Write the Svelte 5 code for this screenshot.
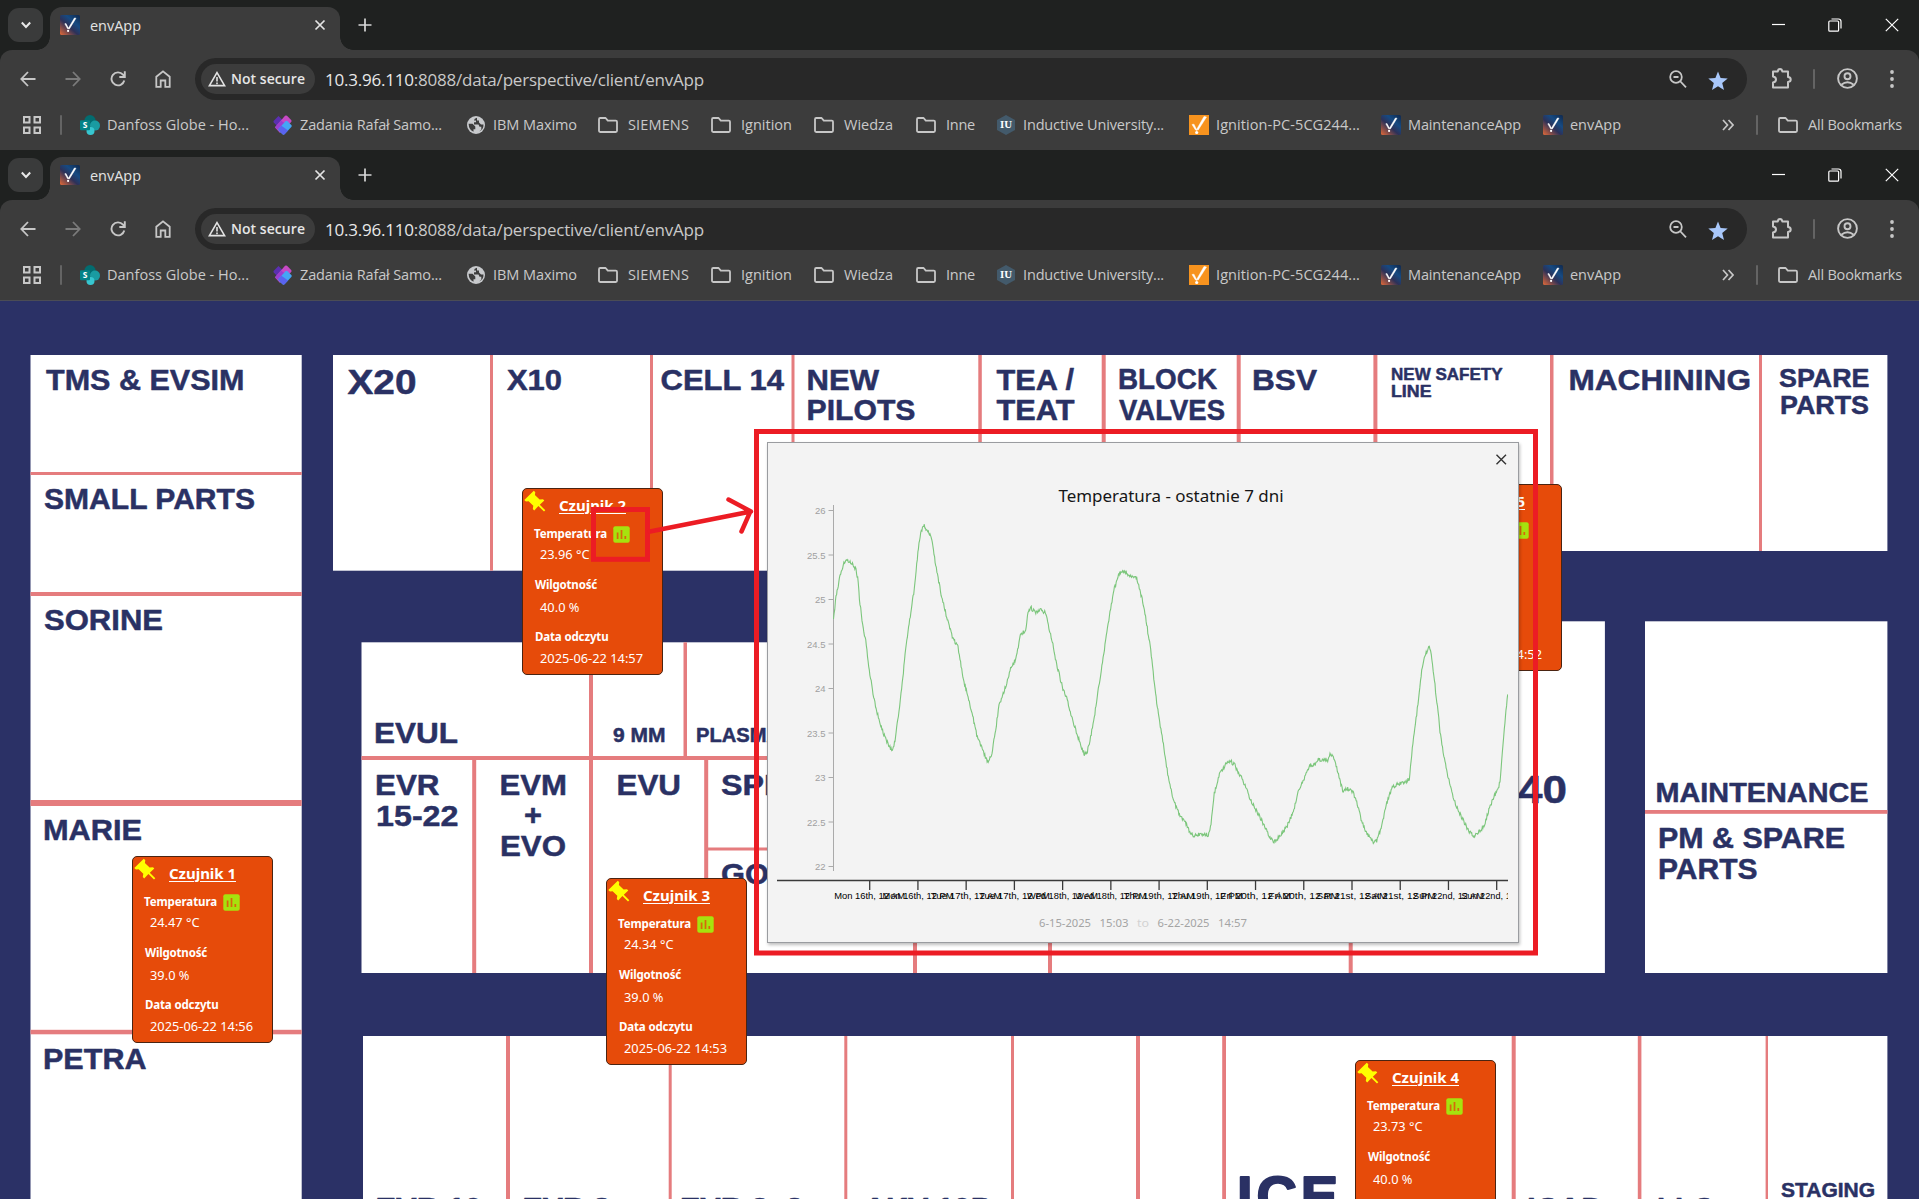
<script>
  // Spread or tighten the letters so a label takes exactly `width` pixels.
  function fit(node, width) {
    const natural = node.getBoundingClientRect().width;
    const count = node.textContent.length;
    node.style.letterSpacing = `${(width - natural) / count}px`;
  }

  const bookmarks = [
    { icon: 'sharepoint', label: 'Danfoss Globe - Ho...', w: 142 },
    { icon: 'planner', label: 'Zadania Rafał Samo...', w: 142 },
    { icon: 'globe', label: 'IBM Maximo', w: 84 },
    { icon: 'folder', label: 'SIEMENS', w: 61 },
    { icon: 'folder', label: 'Ignition', w: 51 },
    { icon: 'folder', label: 'Wiedza', w: 49 },
    { icon: 'folder', label: 'Inne', w: 29 },
    { icon: 'iu', label: 'Inductive University...', w: 141 },
    { icon: 'orange', label: 'Ignition-PC-5CG244...', w: 144 },
    { icon: 'app', label: 'MaintenanceApp', w: 113 },
    { icon: 'app', label: 'envApp', w: 51 }
  ];

  // Floor plan: white blocks, partition walls and room names.
  const blocks = [
    [30.5, 355, 271.2, 850],
    [333, 355, 1100, 215.7],
    [1400, 355, 487.4, 196],
    [361.5, 642.3, 1000, 330.7],
    [1350, 621.3, 254.9, 351.7],
    [1645, 621.3, 242.4, 351.7],
    [363, 1036, 1524.4, 170]
  ];
  const walls = [
    [30.5, 472, 271.2, 3], [30.5, 592, 271.2, 4], [30.5, 800, 271.2, 6], [30.5, 1029.8, 271.2, 4.5],
    [490, 355, 3, 215.7], [650, 355, 3, 215.7], [791.5, 355, 3, 215.7], [978.3, 355, 3.5, 215.7],
    [1101.7, 355, 4, 215.7], [1236.7, 355, 4, 215.7], [1373.4, 355, 4, 215.7], [1550, 355, 3.5, 196],
    [1759, 355, 3, 196],
    [361.5, 756, 700, 4], [706, 847.5, 200, 3],
    [589, 642.3, 4, 330.7], [683.5, 642.3, 3.5, 114], [704.2, 758, 4, 215], [472.2, 758, 4, 215],
    [913, 758, 4, 215], [1048, 758, 4, 215], [1348.7, 758, 4, 215],
    [1645, 810, 242.4, 3.8],
    [506, 1036, 4, 170], [668.7, 1036, 3, 170], [844.3, 1036, 3, 170], [1011, 1036, 3, 170],
    [1136, 1036, 4, 170], [1222.2, 1036, 3.8, 170], [1511.7, 1036, 4, 170], [1637.8, 1036, 3.6, 170],
    [1765.6, 1036, 2.4, 170]
  ];
  // [text, left, right, baseline, font size]
  const rooms = [
    ['TMS & EVSIM', 46, 244.5, 390.3, 30], ['SMALL PARTS', 44, 255, 509.3, 30],
    ['SORINE', 44, 163, 630.3, 30], ['MARIE', 43, 142, 840.3, 30], ['PETRA', 43, 146.5, 1069, 30],
    ['X20', 347.5, 416.5, 394, 35.5], ['X10', 507, 562, 390.2, 30], ['CELL 14', 660.5, 784, 390.2, 30],
    ['NEW', 806.5, 879, 390.2, 30], ['PILOTS', 806.5, 915.5, 420.2, 30],
    ['TEA /', 996.5, 1074, 390, 30], ['TEAT', 996.5, 1074.5, 420.2, 30],
    ['BLOCK', 1118, 1217, 388.5, 29], ['VALVES', 1119, 1225, 419.5, 29], ['BSV', 1252, 1317, 390.2, 30],
    ['NEW SAFETY', 1391, 1502.5, 380.3, 17], ['LINE', 1391, 1431.5, 397.2, 17],
    ['MACHINING', 1568.5, 1751, 389.8, 30], ['SPARE', 1779, 1869.5, 386.5, 26.5], ['PARTS', 1780, 1869, 413.8, 26.5],
    ['EVUL', 374, 458, 742.7, 30], ['9 MM', 613, 665.5, 742.3, 20], ['PLASMA', 696, 781, 742.3, 20],
    ['EVR', 375, 439.5, 795.3, 30], ['15-22', 376, 458.5, 825.7, 30],
    ['EVM', 499.5, 567, 795.3, 30], ['+', 524, 542, 825, 30], ['EVO', 500, 566, 856, 30],
    ['EVU', 616.5, 681, 795.3, 30], ['SPI', 721, 773, 794.8, 30], ['GO', 721, 769, 883.7, 30],
    ['40', 1518, 1567, 802.7, 39.5],
    ['MAINTENANCE', 1655.5, 1868.5, 801.6, 28], ['PM & SPARE', 1658, 1845, 848.2, 30], ['PARTS', 1658, 1757.5, 878.7, 30],
    ['EVR 10', 375.5, 482, 1217.5, 30], ['EVR 8', 522.5, 610, 1217.5, 30], ['EVR 2+3', 680, 803, 1217.5, 30],
    ['AKV 10P', 864, 991, 1217.5, 30],
    ['ICAD', 1527, 1604, 1217.5, 30], ['LLC', 1657, 1714, 1217.5, 30], ['STAGING', 1781, 1875, 1197.2, 20.5]
  ];

  const sensors = [
    { id: 1, x: 132, y: 856, temp: '24.47', hum: '39.0', date: '2025-06-22 14:56' },
    { id: 2, x: 522, y: 488, temp: '23.96', hum: '40.0', date: '2025-06-22 14:57' },
    { id: 3, x: 606, y: 878, temp: '24.34', hum: '39.0', date: '2025-06-22 14:53' },
    { id: 4, x: 1355, y: 1060, temp: '23.73', hum: '40.0', date: '2025-06-22 14:53' },
    { id: 5, x: 1421, y: 484, temp: '24.10', hum: '40.0', date: '2025-06-22 14:52' }
  ];

  const yTicks = ['26', '25.5', '25', '24.5', '24', '23.5', '23', '22.5', '22'];
  const xTicks = ['Mon 16th', 'Tue 17th', 'Wed 18th', 'Thu 19th', 'Fri 20th', 'Sat 21st', 'Sun 22nd'].flatMap((d) => [
    `${d}, 12 AM`,
    `${d}, 12 PM`
  ]);

  const curve = [
    833.5, 619, 836, 595.6, 840, 577, 843.3, 564.5, 847.7, 559.8, 851.3, 562.5, 856, 569.3, 857.7, 578.7, 860, 604,
    863.3, 629.5, 865.7, 641.3, 869.3, 670, 874.3, 700.5, 879, 719.7, 884.3, 736, 889.3, 746.8, 892.3, 751.2, 895, 741,
    897.7, 720.7, 901, 693.7, 905.7, 649.7, 909.7, 619.3, 914.3, 588.9, 916.7, 565.2, 919, 541.6, 921.3, 530.7,
    923.7, 525.3, 927.7, 530.4, 931.7, 539.9, 935.7, 565.2, 941.7, 597.3, 947.3, 619.3, 952.3, 636.2, 958, 647.4,
    960, 659.9, 964, 681.9, 971, 708.9, 976.7, 734.3, 981.7, 747.8, 986, 758.9, 988.7, 762.5, 992, 752.9, 995.7, 729.2,
    999, 705.5, 1005, 688.6, 1010, 670, 1015, 660.9, 1018.3, 648, 1020.3, 635.5, 1023.3, 631.8, 1025.7, 631.8,
    1028, 612.6, 1030.7, 607, 1034.7, 612.6, 1039.3, 609.7, 1045.3, 612.7, 1048.3, 624.4, 1052.3, 641.3, 1056, 661.6,
    1062.3, 686.9, 1067.3, 700.5, 1073.3, 722.4, 1080, 742.7, 1084, 754, 1086.7, 754, 1090, 741, 1094.3, 717.4,
    1100, 678.5, 1105, 644.7, 1110, 612.6, 1113.3, 592.3, 1117.3, 578.7, 1121, 570.6, 1126.7, 572.7, 1132.7, 578.1,
    1136.7, 578.1, 1139.3, 588.2, 1143.3, 604.1, 1146.7, 624.4, 1150.7, 649.7, 1155, 688.6, 1159, 719, 1164, 747.8,
    1168.3, 778.2, 1174, 801.9, 1180, 815.4, 1186, 823.8, 1191, 834.7, 1195, 836, 1198, 834.3, 1208.3, 834.7,
    1211, 823.8, 1214.3, 793.4, 1220, 773.1, 1225.7, 764.7, 1230.3, 760.6, 1235, 765.7, 1243.3, 781.6, 1251.7, 801.9,
    1261.7, 820.5, 1268.3, 834.7, 1274, 842, 1280, 835.7, 1286.7, 827.2, 1293.3, 812, 1299.3, 788.3, 1306.7, 773.1,
    1310.7, 764, 1313.3, 766, 1318.3, 759.8, 1327.7, 759.6, 1330, 754, 1333.3, 757.9, 1336.7, 768, 1342.7, 791,
    1348.3, 788.8, 1353.3, 792.4, 1357.3, 803.6, 1361.7, 822.2, 1368.3, 835.7, 1373.3, 841.8, 1376.7, 840.8,
    1381.7, 825.5, 1386.7, 803.6, 1391.7, 788.3, 1398.3, 783.8, 1406.7, 781.6, 1409.3, 778.2, 1412.3, 747.8,
    1416.7, 714, 1421.7, 671.7, 1425, 654.8, 1429.3, 647, 1431.3, 654.8, 1435, 685.2, 1440, 730.9, 1445, 763,
    1450.7, 788.3, 1456.7, 807, 1463.3, 820.5, 1469.3, 832.3, 1474, 836, 1478.3, 832.3, 1484, 826.2, 1488.3, 812,
    1493.3, 798.5, 1498.3, 788.3, 1500, 781.6, 1502.3, 754.6, 1504.3, 727.5, 1507.7, 693.7
  ];

  // Sensor jitter: small and deterministic.
  function trace(values) {
    let seed = 7;
    let out = `M${values[0]} ${values[1]}`;
    for (let i = 2; i < values.length; i += 2) {
      const [x0, y0, x1, y1] = values.slice(i - 2, i + 2);
      const n = Math.max(1, Math.round((x1 - x0) / 0.6));
      for (let k = 1; k <= n; k++) {
        seed = (seed * 73 + 41) % 1009;
        const noise = (seed / 1009 - 0.5) * 4;
        out += `L${(x0 + ((x1 - x0) * k) / n).toFixed(1)} ${(y0 + ((y1 - y0) * k) / n + noise).toFixed(1)}`;
      }
    }
    return out;
  }
  const line = trace(curve);
</script>

{#snippet icon(kind)}
  {#if kind === 'folder'}
    <svg class="ico" viewBox="0 0 20 20" fill="none" stroke="#c7c7c7" stroke-width="1.8" stroke-linejoin="round">
      <path d="M1 16V4.2Q1 3 2.2 3H7.6L9.8 5.6H17.8Q19 5.6 19 6.8V15.8Q19 17 17.8 17H2.2Q1 17 1 15.8Z" />
    </svg>
  {:else if kind === 'sharepoint'}
    <svg class="ico" viewBox="0 0 20 20">
      <circle cx="10" cy="5.6" r="5.6" fill="#036c70" />
      <circle cx="15" cy="10.6" r="5" fill="#1a9ba1" />
      <circle cx="10.5" cy="16" r="4" fill="#37c6d0" />
      <rect x="0" y="5.2" width="10" height="10" rx="1" fill="#038387" />
      <text x="5" y="13.2" font-size="8.5" font-weight="700" fill="#fff" text-anchor="middle">S</text>
    </svg>
  {:else if kind === 'planner'}
    <svg class="ico" viewBox="0 0 20 20">
      <path d="M5.5 1 10 5.5 5 12 .8 7.6Q0 6.600 .8 5.700Z" fill="#5b2fb0" />
      <path d="M12 .8Q13 0 14 .8L18.200 5Q19 6 18.200 7L7 18 2 12.500Z" fill="#c649c4" />
      <path d="M2 12 8 5.500 12.500 9 6.500 16.500Z" fill="#9a3fd0" />
      <path d="M12.600 6.200Q13.500 5.400 14.400 6.200L18.300 10Q19.100 11 18.300 12L11.500 19.300Q10.500 20.200 9.500 19.300L5.800 15.500Q5 14.600 5.800 13.600Z" fill="#45a5f5" />
      <path d="M5.800 13.600 8.500 10.700 15 15.500 11.500 19.300Q10.500 20.200 9.500 19.300L5.800 15.500Q5 14.600 5.800 13.600Z" fill="#5a63f0" />
    </svg>
  {:else if kind === 'globe'}
    <svg class="ico" viewBox="0 0 20 20">
      <circle cx="10" cy="10" r="9" fill="#c7c9cc" />
      <path d="M2.600 8.800H6.500L9.300 11.500V14.200H7.500V16.800Q2.800 14.800 2.600 8.800ZM11 2.700Q8 3.500 8 5.500H10V7.300H8V9.500H12.500L13.500 11.800H15.300V14.500L13.200 16.600Q17.700 14.500 17.500 9.600H15L13 7.500V5.500H11Z" fill="#3c3c3c" />
    </svg>
  {:else if kind === 'iu'}
    <svg class="ico" viewBox="0 0 20 20">
      <path d="M10 0 19 5V15L10 20 1 15V5Z" fill="#435a6b" />
      <text class="serif" x="10" y="13.200" font-size="9.500" font-weight="700" fill="#fff" text-anchor="middle" textLength="12" lengthAdjust="spacingAndGlyphs">IU</text>
    </svg>
  {:else if kind === 'orange'}
    <svg class="ico" viewBox="0 0 20 20">
      <rect width="20" height="20" fill="#f7931e" />
      <path d="M3 9.500 5 9.200 8 15.500 6.300 14.800ZM15 1.500 17.500 2 9.200 15 7.600 14.500Z" fill="#fff" stroke="#fff" stroke-width=".500" />
      <circle cx="7.700" cy="17.500" r="1.600" fill="#fff" />
    </svg>
  {:else if kind === 'app'}
    <svg class="ico" viewBox="0 0 20 20">
      <defs>
        <linearGradient id="navyglow" x1="1" y1="0" x2="0.100" y2="1">
          <stop offset="0" stop-color="#10284c" />
          <stop offset="0.350" stop-color="#164a82" />
          <stop offset="0.600" stop-color="#2d3158" />
          <stop offset="1" stop-color="#d0643c" />
        </linearGradient>
      </defs>
      <rect width="20" height="20" rx="1.500" fill="url(#navyglow)" />
      <path d="M4.800 8.800 6 8.500 8.600 13.600 7.600 13.800ZM14.400 3 16 3.200 9.400 13.900 8.200 13.600Z" fill="#fff" stroke="#fff" stroke-width=".500" />
      <circle cx="8.100" cy="15.900" r="1.100" fill="#fff" />
    </svg>
  {/if}
{/snippet}

{#snippet browser()}
  <header class="browser">
    <div class="tabs">
      <button class="chev" aria-label="Search tabs">
        <svg width="14" height="14" viewBox="0 0 14 14"><path d="M2.800 4.500 7 9 11.200 4.500" fill="none" stroke="#e8e8e8" stroke-width="2" /></svg>
      </button>
      <div class="tab">
        {@render icon('app')}
        <span class="tabname"><span use:fit={51}>envApp</span></span>
        <svg class="tabx" width="12" height="12" viewBox="0 0 12 12"><path d="M1.500 1.500 10.500 10.500M10.500 1.500 1.500 10.500" stroke="#e3e3e3" stroke-width="1.700" /></svg>
      </div>
      <svg class="plus" width="14" height="14" viewBox="0 0 14 14"><path d="M7 .5V13.500M.5 7H13.500" stroke="#d8d8d8" stroke-width="1.700" /></svg>
      <div class="win">
        <svg width="13" height="14" viewBox="0 0 13 14"><path d="M0 6.500H13" stroke="#fff" stroke-width="1.200" /></svg>
        <svg width="14" height="14" viewBox="0 0 14 14" fill="none" stroke="#fff" stroke-width="1.200"><rect x=".8" y="3" width="9.800" height="10.200" rx="1" /><path d="M3.500 1H10.500Q13 1 13 3.500V10.500" /></svg>
        <svg width="14" height="14" viewBox="0 0 14 14"><path d="M.8 .8 13.200 13.200M13.200 .8 .8 13.200" stroke="#fff" stroke-width="1.200" /></svg>
      </div>
    </div>

    <div class="toolbar">
      <div class="nav">
        <svg width="16" height="16" viewBox="0 0 16 16" fill="none" stroke="#c7c7c7" stroke-width="1.800"><path d="M15.500 8H1.500M8 1 1.300 8 8 15" /></svg>
        <svg width="16" height="16" viewBox="0 0 16 16" fill="none" stroke="#7b7b7b" stroke-width="1.800"><path d="M.5 8H14.500M8 1 14.700 8 8 15" /></svg>
        <svg width="16" height="16" viewBox="0 0 16 16" fill="none" stroke="#c7c7c7" stroke-width="1.900"><path d="M14.300 9.500A6.500 6.500 0 1 1 13 3.700L14.500 5.500M14.800 .3V6H9.300" /></svg>
        <svg width="16" height="18" viewBox="0 0 16 18" fill="none" stroke="#c7c7c7" stroke-width="1.800"><path d="M1.300 16.900V6.800L8 1.300 14.700 6.800V16.900H10.300V10.500H5.700V16.900Z" /></svg>
      </div>
      <div class="omnibox">
        <div class="chip">
          <svg width="18" height="16" viewBox="0 0 18 16"><path d="M9 1.700 16.600 14.600H1.400Z" fill="none" stroke="#e3e3e3" stroke-width="1.600" /><path d="M9 6V10.500M9 11.600V13.300" stroke="#e3e3e3" stroke-width="1.600" /></svg>
          <span class="secure" use:fit={74}>Not secure</span>
        </div>
        <div class="url"><span use:fit={379}><b>10.3.96.110</b>:8088/data/perspective/client/envApp</span></div>
        <svg width="18" height="18" viewBox="0 0 18 18" fill="none" stroke="#c7c7c7" stroke-width="1.800"><circle cx="7" cy="7" r="5.800" /><path d="M11 11 17 17.300M4.500 7H9.500" /></svg>
        <svg class="star" width="20" height="20" viewBox="0 0 20 20"><path d="M10 .5 12.600 7.100 19.700 7.600 14.200 12.100 16 19 10 15.200 4 19 5.800 12.100 .3 7.600 7.400 7.100Z" fill="#a8c7fa" /></svg>
      </div>
      <svg class="puzzle" width="21" height="21" viewBox="0 0 21 21" fill="none" stroke="#c7c7c7" stroke-width="2" stroke-linejoin="round"><path d="M2 3.500H6.800Q7 1 9 1T11.300 3.500H17V9Q19.700 9.300 19.700 11.500T17 14V19.500H2V14.500Q5 14 5 11.500T2 8.500Z" /></svg>
      <i class="sep"></i>
      <svg class="user" width="21" height="21" viewBox="0 0 21 21" fill="none" stroke="#c7c7c7" stroke-width="1.900"><circle cx="10.500" cy="10.500" r="9.400" /><circle cx="10.500" cy="8.300" r="3" /><path d="M4.300 16.800Q10.500 11.800 16.700 16.800" /></svg>
      <svg class="dots" width="4" height="20" viewBox="0 0 4 20" fill="#c7c7c7"><circle cx="2" cy="3" r="1.900" /><circle cx="2" cy="10" r="1.900" /><circle cx="2" cy="17" r="1.900" /></svg>
    </div>

    <div class="bookmarks">
      <svg width="18" height="18" viewBox="0 0 18 18" fill="none" stroke="#c7c7c7" stroke-width="2"><rect x="1" y="1" width="5.500" height="5.500" /><rect x="11.500" y="1" width="5.500" height="5.500" /><rect x="1" y="11.500" width="5.500" height="5.500" /><rect x="11.500" y="11.500" width="5.500" height="5.500" /></svg>
      <i class="sep"></i>
      <nav class="marks">
        {#each bookmarks as b}
          <span class="mark" class:wide={b.icon === 'folder'}>{@render icon(b.icon)}<span use:fit={b.w}>{b.label}</span></span>
        {/each}
      </nav>
      <svg width="12" height="12" viewBox="0 0 12 12" fill="none" stroke="#c7c7c7" stroke-width="1.700"><path d="M1 1 5.500 6 1 11M6.500 1 11 6 6.500 11" /></svg>
      <i class="sep last"></i>
      <span class="mark wide">{@render icon('folder')}<span use:fit={94}>All Bookmarks</span></span>
    </div>
  </header>
{/snippet}

<div class="page">
  {@render browser()}
  {@render browser()}

  <main class="map">
    <svg class="plan" viewBox="0 301 1919 898" width="1919" height="898">
      {#each blocks as [x, y, w, h]}<rect {x} {y} width={w} height={h} fill="#fff" />{/each}
      {#each walls as [x, y, w, h]}<rect {x} {y} width={w} height={h} fill="#e57c7e" />{/each}
      {#each rooms as [label, x, right, y, size]}
        <text class="room" {x} {y} font-size={size} textLength={right - x} lengthAdjust="spacingAndGlyphs">{label}</text>
      {/each}
      <text class="room big" x="1237" y="1214.500" font-size="56" textLength="101">ICE</text>
    </svg>

    {#each sensors as s}
      <article class="card" style="left:{s.x}px; top:{s.y - 301}px">
        <svg class="pin" width="22" height="22" viewBox="0 0 22 22" fill="#ffff00"><path d="M9.800 .8 11.300 2.300 10.900 4.900 15.600 9.600 19 9.200 20.300 10.500 15.800 14.700 21.300 20.300 20 21.500 14.400 16.100 10.200 20.500 8.800 19.100 9.300 15.800 4.600 11.200 1.900 11.500 .3 10Z" /></svg>
        <h2><span use:fit={67}>Czujnik {s.id}</span></h2>
        <div class="label first">
          <span use:fit={73}>Temperatura</span>
          <svg width="17" height="17" viewBox="0 0 17 17"><rect x=".3" y=".3" width="16.400" height="16.400" rx="2" fill="#a6e20e" /><path d="M4.600 6.500V13M8.500 4V13M12.300 10V13" stroke="#e34a0b" stroke-width="1.700" opacity=".8" /></svg>
        </div>
        <div class="value"><span use:fit={49.5}>{s.temp} °C</span></div>
        <div class="label second"><span use:fit={62}>Wilgotność</span></div>
        <div class="value low"><span use:fit={39.5}>{s.hum} %</span></div>
        <div class="label third"><span use:fit={73.5}>Data odczytu</span></div>
        <div class="value date"><span use:fit={103}>{s.date}</span></div>
      </article>
    {/each}

    <section class="popup">
      <svg class="chart" viewBox="768 443 750 499" width="750" height="499">
        <clipPath id="plot"><rect x="768" y="443" width="740" height="499" /></clipPath>
        <text class="title" x="1058.500" y="501.500" textLength="225" lengthAdjust="spacingAndGlyphs">Temperatura - ostatnie 7 dni</text>
        <g class="yaxis">
          <path d="M833.500 505V871" />
          {#each yTicks as t, i}
            <path d="M828.500 {510.5 + i * 44.5}H833.500" />
            <text x="825.500" y={514 + i * 44.5}>{t}</text>
          {/each}
        </g>
        <path class="series" d={line} clip-path="url(#plot)" />
        <g class="xaxis" clip-path="url(#plot)">
          <path d="M777 880.500H1508" />
          {#each xTicks as t, i}
            <path d="M{869.7 + i * 48.23} 881V890" />
            <text x={869.7 + i * 48.23} y="899" textLength="71" lengthAdjust="spacingAndGlyphs">{t}</text>
          {/each}
        </g>
        <g class="range">
          <text x="1039" y="927" textLength="52" lengthAdjust="spacingAndGlyphs">6-15-2025</text>
          <text x="1099.500" y="927" textLength="29" lengthAdjust="spacingAndGlyphs">15:03</text>
          <text class="to" x="1137" y="927" textLength="12" lengthAdjust="spacingAndGlyphs">to</text>
          <text x="1157.500" y="927" textLength="52" lengthAdjust="spacingAndGlyphs">6-22-2025</text>
          <text x="1218" y="927" textLength="29" lengthAdjust="spacingAndGlyphs">14:57</text>
        </g>
        <path d="M1496.500 454.800 1506 464.300M1506 454.800 1496.500 464.300" stroke="#333" stroke-width="1.400" />
      </svg>
    </section>

    <svg class="marker" viewBox="580 420 970 545" width="970" height="545" fill="none" stroke="#ec1c24" stroke-width="5">
      <rect x="756.500" y="431.500" width="779" height="521.500" />
      <rect x="593.500" y="509.500" width="54" height="49.800" />
      <path d="M650 531.500 751 511.500M728.500 499.500 750.500 511.200 741.500 531.500" stroke-width="4.500" stroke-linejoin="round" stroke-linecap="round" />
    </svg>
  </main>
</div>

<style>
  :global(body) { overflow: hidden; }
  .page { width: 1919px; height: 1199px; overflow: hidden; display: flex; flex-direction: column; font-family: 'Open Sans', 'Noto Sans', sans-serif; }
  svg { display: block; flex: none; }
  .ico { width: 20px; height: 20px; }
  .serif { font-family: 'Liberation Serif', serif; }

  .browser { height: 150px; flex: none; background: #1f2120; color: #c9c9c9; font-size: 14.500px; white-space: nowrap; }
  .mark > span { display: inline-block; padding-bottom: 2px; }
  .tabs { height: 50px; display: flex; align-items: center; padding-left: 8px; }
  .chev { width: 35px; height: 34px; border: 0; padding: 0; border-radius: 11px; background: #3a3b3b; display: grid; place-items: center; }
  .tab { position: relative; align-self: flex-end; width: 290px; height: 43px; margin-left: 7px; padding: 0 14px 7px 10px; box-sizing: border-box; display: flex; align-items: center; border-radius: 12px 12px 0 0; background: #3c3c3c; color: #e3e3e3; }
  .tab::before, .tab::after { content: ''; position: absolute; bottom: 0; width: 13px; height: 13px; }
  .tab::before { left: -13px; background: radial-gradient(circle at 0 0, transparent 12.500px, #3c3c3c 13px); }
  .tab::after { right: -13px; background: radial-gradient(circle at 100% 0, transparent 12.500px, #3c3c3c 13px); }
  .tabname { flex: 1; margin-left: 10px; padding-top: 1px; }
  .tabname > span { display: inline-block; }
  .plus { margin-left: 18px; }
  .win { margin-left: auto; margin-right: 20px; display: flex; align-items: center; gap: 43px; }

  .toolbar { height: 50px; display: flex; align-items: flex-start; box-sizing: border-box; padding: 8px 0 0 20px; background: #3c3c3c; border-radius: 12px 12px 0 0; }
  .toolbar > * { flex: none; }
  .nav { width: 175px; height: 42px; display: flex; align-items: center; gap: 29px; }
  .omnibox { width: 1552px; height: 42px; box-sizing: border-box; border-radius: 21px; background: #282828; display: flex; align-items: center; padding: 0 19px 0 6px; }
  .chip { width: 114px; height: 30px; box-sizing: border-box; padding-left: 7px; display: flex; align-items: center; gap: 5px; border-radius: 15px; background: #3c3c3c; color: #e6e6e6; }
  .secure { font-weight: 600; font-size: 14px; padding-bottom: 1px; }
  .url { flex: 1; padding-left: 10px; font-size: 17px; padding-top: 0; }
  .url span { display: inline-block; }
  .url b { font-weight: 400; color: #e8e8e8; }
  .star { margin-left: 21px; margin-top: 3px; }
  .puzzle { margin: 10px 0 0 24px; }
  .sep { width: 2px; height: 20px; background: #646464; border-radius: 1px; }
  .toolbar .sep { margin: 11px 0 0 21px; }
  .user { margin: 10px 0 0 22px; }
  .dots { margin: 11px 0 0 32px; }

  .bookmarks { height: 50px; display: flex; align-items: center; background: #3c3c3c; padding-left: 23px; }
  .bookmarks .sep { margin: 0 18px 0 19px; }
  .bookmarks .last { margin: 0 20px 0 22px; }
  .marks { width: 1642px; display: grid; grid-template-columns: 193px 193px 132px 113px 103px 102px 80px 193px 192px 162px 1fr; }
  .mark { display: flex; align-items: center; gap: 7px; }
  .mark.wide { gap: 10px; }

  .map { position: relative; height: 899px; background: #2b3166; border-top: 1px solid #4b4c55; box-sizing: border-box; }
  .room { font-family: 'Liberation Sans', Arial, sans-serif; font-weight: 700; fill: #2a3164; stroke: #2a3164; stroke-width: 0.500px; stroke-linejoin: round; white-space: pre; }
  .room.big { stroke-width: 2px; }

  .card { position: absolute; width: 140.500px; height: 187px; box-sizing: border-box; padding-top: 5px; border: 1px solid #4a2412; border-radius: 5px; background: #e64b0a; color: #fff; font-family: 'Noto Sans', 'Open Sans', sans-serif; white-space: nowrap; }
  .pin { position: absolute; left: 1px; top: 1px; }
  .card span { display: inline-block; }
  h2 { margin: 0 0 10px 36px; font-size: 15px; line-height: 22px; font-weight: 700; text-decoration: none; }
  h2 span { text-decoration: underline; text-decoration-thickness: 1px; text-underline-offset: 1.500px; }
  .label { height: 16px; margin-left: 12px; font-size: 11.500px; line-height: 16px; font-weight: 700; display: flex; align-items: center; }
  .label.first { margin-left: 11px; gap: 6px; }
  .value { margin: 3px 0 14px 17px; height: 18px; line-height: 18px; font-size: 12.800px; }
  .value.low { margin: 5px 0 13px 17px; }
  .value.date { margin-top: 4px; }

  .popup { position: absolute; left: 767px; top: 141px; width: 752px; height: 501px; box-sizing: border-box; border: 1px solid #9a9ca0; background: #f3f3f3; box-shadow: 1px 2px 3px rgba(0, 0, 0, 0.250); }
  .title { font: 16.800px 'Noto Sans', sans-serif; fill: #161616; }
  .yaxis path { stroke: #aaa; stroke-width: 1; }
  .yaxis text { font: 9.500px 'Liberation Sans', sans-serif; fill: #a0a0a0; text-anchor: end; }
  .xaxis path { stroke: #3a3a3a; stroke-width: 1.300; }
  .xaxis text { font: 9.800px 'Liberation Sans', sans-serif; fill: #000; text-anchor: middle; }
  .series { fill: none; stroke: #7cc67c; stroke-width: 1.100; }
  .range text { font: 11.500px 'Noto Sans', sans-serif; fill: #a4a4a4; }
  .range .to { fill: #d2d2d2; }
  .marker { position: absolute; left: 580px; top: 119px; pointer-events: none; }
</style>
